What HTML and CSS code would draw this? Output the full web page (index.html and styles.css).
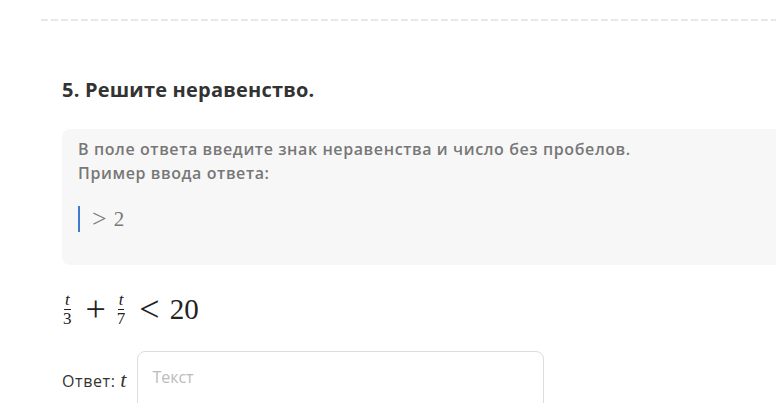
FILE: index.html
```html
<!DOCTYPE html>
<html>
  <head>
    <meta charset="utf-8">
    <title>Задание 5</title>
    <link rel="stylesheet" href="styles.css">
  </head>
  <body>
    <div class="page">
      <div class="divider"></div>

      <div class="task">
        <h2 class="task-title">5. Решите неравенство.</h2>

        <div class="hint">
          <p>В поле ответа введите знак неравенства и число без пробелов.<br>Пример ввода ответа:</p>
          <div class="hint-example math">
            <span class="caret"></span>
            <span class="rel">&gt;</span>
            <span>2</span>
          </div>
        </div>

        <div class="formula math">
          <span class="frac"><span class="num"><i>t</i></span><span class="den">3</span></span>
          <span class="op">+</span>
          <span class="frac"><span class="num"><i>t</i></span><span class="den">7</span></span>
          <span class="op">&lt;</span>
          <span>20</span>
        </div>

        <div class="answer">
          <label class="answer-label">Ответ: <i class="math var">t</i></label>
          <input class="answer-input" type="text" placeholder="Текст">
        </div>
      </div>
    </div>
  </body>
</html>
```

FILE: styles.css
```css
*{
  margin: 0;
  padding: 0;
  box-sizing: border-box;
}
body{
  background-color: #fff;
  font-family: "Open Sans", "Noto Sans", sans-serif;
  color: #333;
  overflow: hidden;
}
.page{
  padding: 19px 0 0 41px;
}
.divider{
  height: 2px;
  background: repeating-linear-gradient(90deg, #e8e8e8 0 7px, transparent 7px 10px);
}
.task{
  padding: 55px 0 0 21px;
}
.task-title{
  font-size: 20px;
  line-height: 28px;
  font-weight: 700;
  letter-spacing: 0.2px;
  color: #333;
}
.hint{
  margin-top: 25px;
  background-color: #f7f7f7;
  border-radius: 8px 0 0 8px;
  padding: 8px 16px 20px;
  height: 136px;
}
.hint p{
  font-size: 16px;
  line-height: 24px;
  font-weight: 600;
  letter-spacing: 0.6px;
  color: #777;
}
.hint-example{
  display: flex;
  align-items: center;
  margin-top: 21px;
  height: 26px;
  font-size: 21px;
  color: #777;
}
.caret{
  width: 2px;
  height: 26px;
  background-color: #3f79d0;
  margin-right: 12px;
}
.hint-example .rel{
  font-size: 26px;
  margin-right: 7px;
}
.math{
  font-family: "Liberation Serif", "DejaVu Serif", serif;
}
.formula{
  display: flex;
  align-items: center;
  margin-top: 22px;
  font-size: 29px;
  color: #222;
  height: 44px;
}
.frac{
  display: inline-flex;
  flex-direction: column;
  align-items: center;
  font-size: 17px;
  line-height: 17px;
  padding: 0 1px;
}
.num{
  border-bottom: 1px solid #222;
  padding: 0 1px 1px;
}
.op{
  font-size: 36px;
  line-height: 36px;
  margin: 0 10px 0 13px;
}
.answer{
  display: flex;
  align-items: flex-start;
  margin-top: 20px;
}
.answer-label{
  font-size: 16px;
  letter-spacing: 0.6px;
  color: #333;
  margin-top: 16px;
  margin-right: 11px;
}
.var{
  font-size: 22px;
  letter-spacing: 0;
}
.answer-input{
  width: 407px;
  height: 60px;
  border: 1px solid #dcdcdc;
  border-radius: 8px;
  padding: 0 14px 8px;
  font-family: "Open Sans", sans-serif;
  font-size: 16px;
  color: #333;
  outline: none;
}
.answer-input::placeholder{
  color: #bbb;
}
```
